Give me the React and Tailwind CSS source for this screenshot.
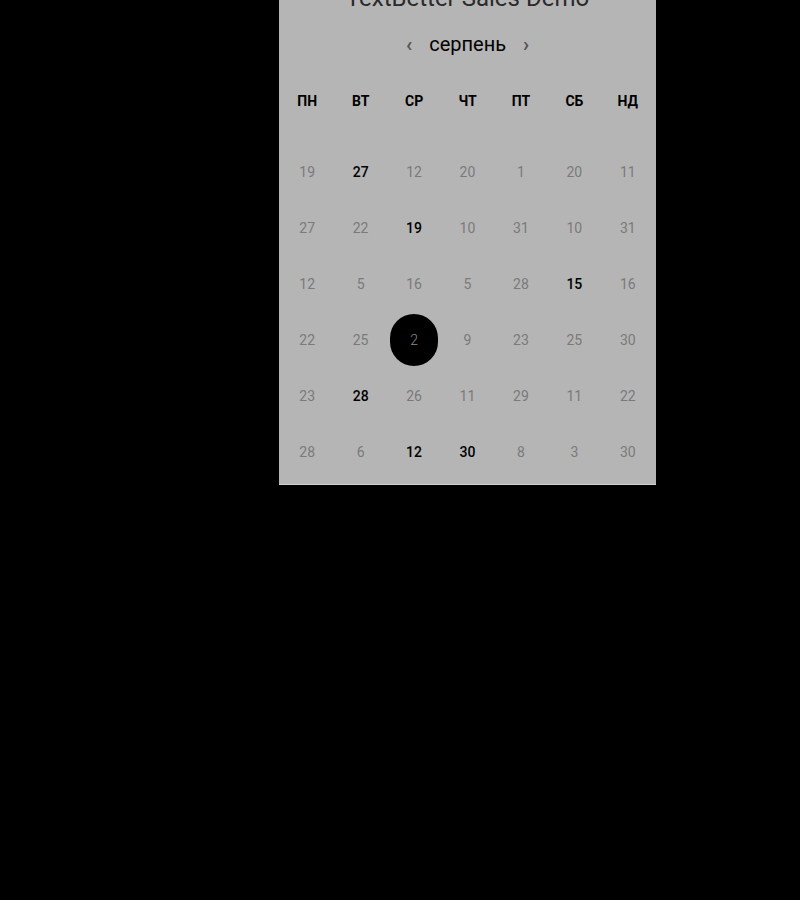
import React from 'react';

const days = ['пн', 'вт', 'ср', 'чт', 'пт', 'сб', 'нд'];

// [value, highlighted]
const rows = [
  [[19], [27, 1], [12], [20], [1], [20], [11]],
  [[27], [22], [19, 1], [10], [31], [10], [31]],
  [[12], [5], [16], [5], [28], [15, 1], [16]],
  [[22], [25], [2, 2], [9], [23], [25], [30]],
  [[23], [28, 1], [26], [11], [29], [11], [22]],
  [[28], [6], [12, 1], [30, 1], [8], [3], [30]],
];

const Cell = ({ value, state }) => {
  if (state === 2) {
    return (
      <div className="flex h-[56px] items-center justify-center">
        <span className="flex h-[52px] w-[48px] items-center justify-center rounded-full bg-black text-[14px] font-light text-[#8a8a8a]">
          {value}
        </span>
      </div>
    );
  }
  return (
    <div
      className={
        'flex h-[56px] items-center justify-center text-[14px] ' +
        (state === 1 ? 'font-medium text-black' : 'text-[#7a7a7a]')
      }
    >
      {value}
    </div>
  );
};

export default function App() {
  return (
    <div className="h-[900px] w-[800px] overflow-hidden bg-black font-['Roboto','Liberation_Sans',sans-serif]">
      <div className="ml-[279px] flex w-[377px] flex-col border-b border-[#cfcfcf] bg-[#b5b5b5] pb-[4px]">
        <div className="-mt-[18px] text-center text-[24px] leading-[32px] text-[#2a2a2a]">
          TextBetter Sales Demo
        </div>

        <div className="mt-[14px] flex h-[32px] items-center justify-center gap-[17px]">
          <span className="text-[20px] font-bold leading-none text-[#555]">‹</span>
          <span className="text-[20px] leading-none text-black">серпень</span>
          <span className="text-[20px] font-bold leading-none text-[#555]">›</span>
        </div>

        <div className="mt-[31px] grid h-[20px] grid-cols-7 items-center px-[1.5px]">
          {days.map((d) => (
            <div key={d} className="text-center text-[14px] font-bold uppercase text-black">
              {d}
            </div>
          ))}
        </div>

        <div className="mt-[33px] grid grid-cols-7 px-[1.5px]">
          {rows.flat().map(([v, s], i) => (
            <Cell key={i} value={v} state={s} />
          ))}
        </div>
      </div>
    </div>
  );
}
